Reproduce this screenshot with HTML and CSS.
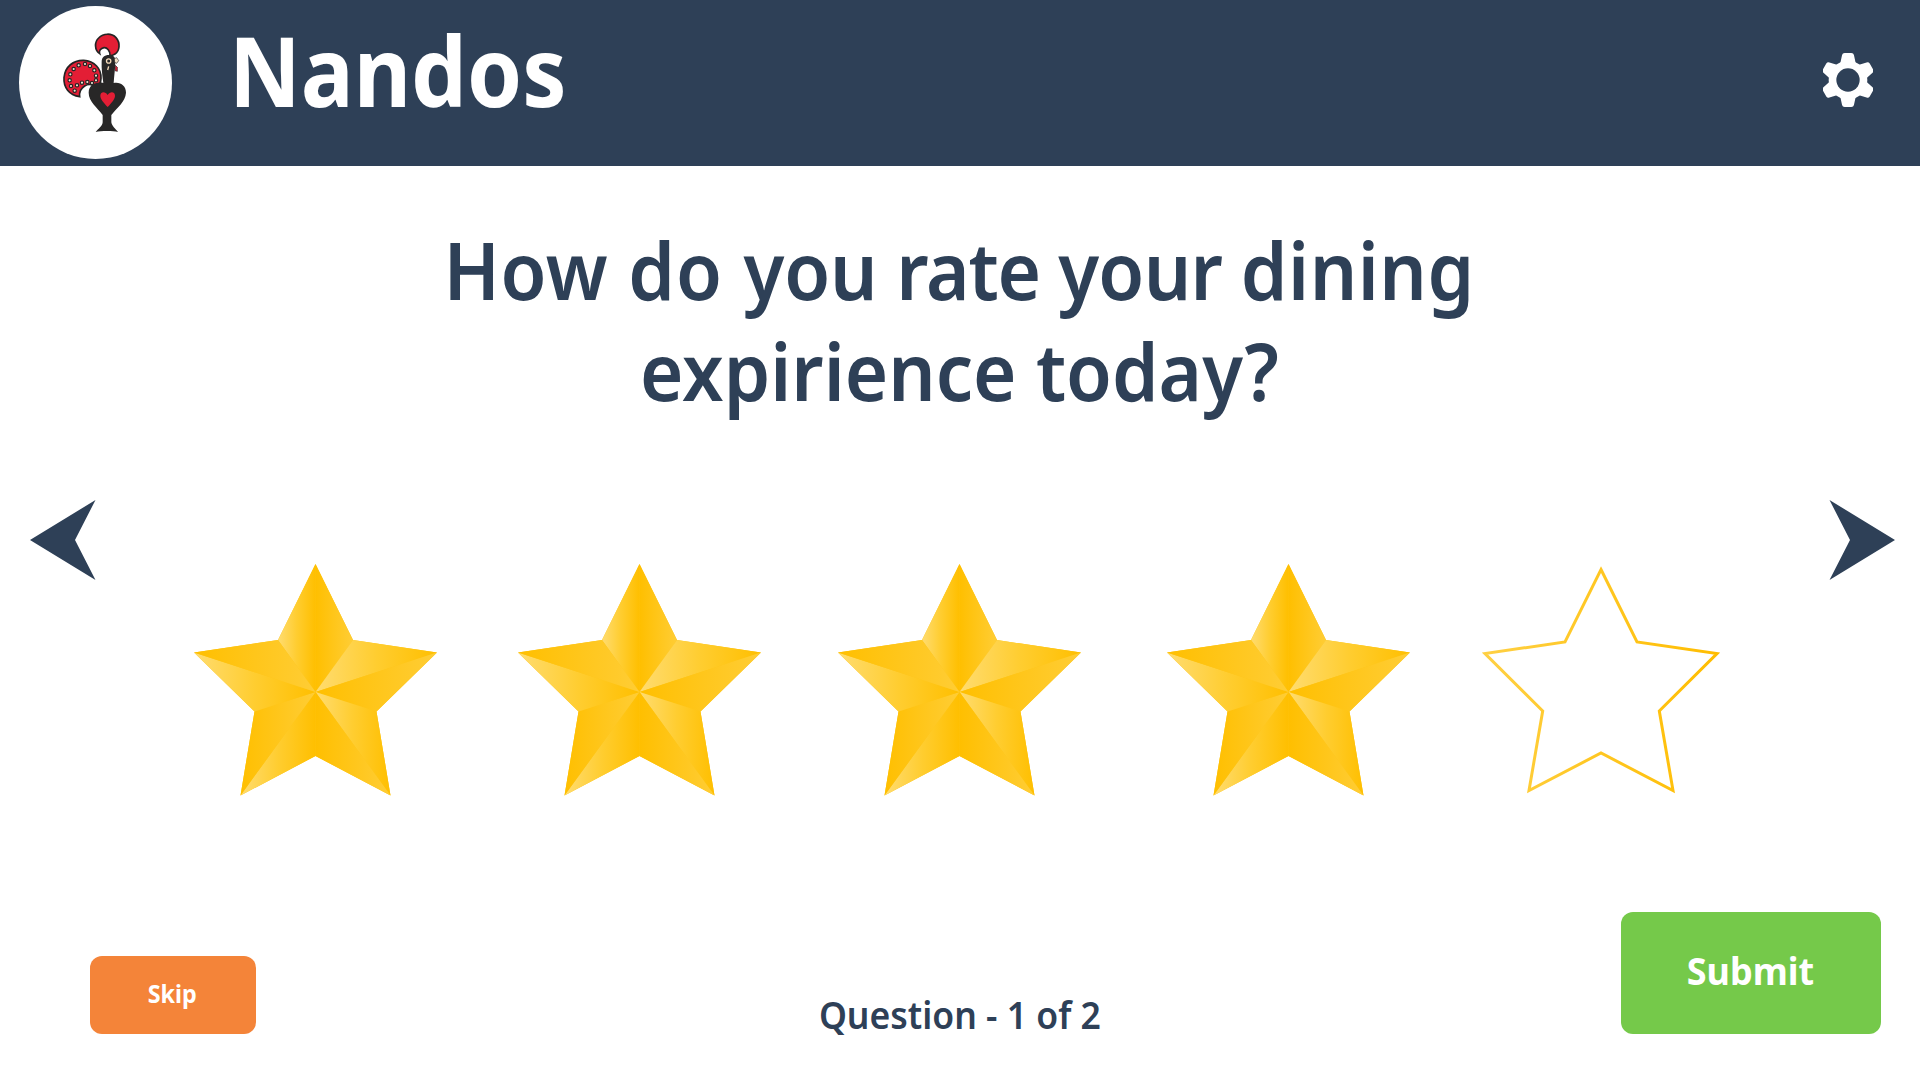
FILE: index.html
```html
<!DOCTYPE html>
<html lang="en">
<head>
<meta charset="utf-8">
<title>Nandos</title>
<link rel="stylesheet" href="styles.css">
</head>
<body>
<svg class="defs" width="0" height="0" aria-hidden="true">
  <defs>
    <linearGradient id="light"><stop offset="0" stop-color="#ffdc70"/><stop offset=".5" stop-color="#ffcd30"/><stop offset="1" stop-color="#ffbf00"/></linearGradient>
    <linearGradient id="deep"><stop offset="0" stop-color="#ffbf00"/><stop offset="1" stop-color="#ffcd35"/></linearGradient>
    <linearGradient id="outline"><stop offset="0" stop-color="#ffd043"/><stop offset="1" stop-color="#ffbd00"/></linearGradient>
    <symbol id="star" viewBox="0 0 243 232">
      <path fill="#ffc517" d="M121.500 0L159 76L243 88.500L182.500 147.500L196.500 231.500L121.500 192L46.500 231.500L60.500 147.500L0 88.500L84 76Z"/>
      <path fill="url(#light)" d="M121.500 0V128L84 76Z"/>
      <path fill="url(#deep)" d="M121.500 0V128L159 76Z"/>
      <path fill="url(#light)" d="M121.500 128L159 76L243 88.500Z"/>
      <path fill="url(#deep)" d="M121.500 128L243 88.500L182.500 147.500Z"/>
      <path fill="url(#light)" d="M121.500 128L182.500 147.500L196.500 231.500Z"/>
      <path fill="url(#deep)" d="M121.500 128L196.500 231.500L121.500 192Z"/>
      <path fill="url(#light)" d="M121.500 128V192L46.500 231.500Z"/>
      <path fill="url(#deep)" d="M121.500 128L46.500 231.500L60.500 147.500Z"/>
      <path fill="url(#light)" d="M121.500 128L60.500 147.500L0 88.500Z"/>
      <path fill="url(#deep)" d="M121.500 128L0 88.500L84 76Z"/>
    </symbol>
  </defs>
</svg>

<header class="topbar">
  <div class="logo">
    <svg viewBox="0 0 270 345" width="90" height="115">
      <path fill="#e31e35" stroke="#242424" stroke-width="5" d="M89 215C57 210 40 187 42 158C45 125 70 105 101 106C134 108 154 131 153 160C152 176 146 184 140 190C132 178 116 175 104 183C93 190 87 200 89 215Z"/>
      <path fill="#e31e35" stroke="#242424" stroke-width="5" d="M149 86C133 75 133 51 146 39C160 24 185 24 198 38C212 54 209 78 195 87C189 91 184 92 180 92C181 77 171 67 162 68C152 70 146 77 149 86Z"/>
      <g fill="#f3e3cf" stroke="#242424" stroke-width="3.500">
        <circle cx="59" cy="166" r="5"/><circle cx="61" cy="148" r="5"/><circle cx="71" cy="132" r="5"/><circle cx="86" cy="121" r="5"/><circle cx="105" cy="117" r="5"/><circle cx="120" cy="123" r="5"/><circle cx="133" cy="136" r="5"/><circle cx="138" cy="152" r="5"/><circle cx="138" cy="166" r="5"/><circle cx="126" cy="174" r="5"/><circle cx="112" cy="171" r="5"/><circle cx="96" cy="173" r="5"/><circle cx="81" cy="181" r="5"/><circle cx="63" cy="183" r="5"/><circle cx="74" cy="197" r="5"/>
      </g>
      <path fill="#282727" d="M160 174C157 150 154 130 155 110C155 97 163 90 177 90C190 90 197 97 196 108C196 130 192 155 191 174C211 170 228 182 228 203C226 231 202 246 184 270V292C186 304 197 312 204 321C190 317 153 317 137 321C145 311 157 304 158 292V270C142 247 116 230 116 203C116 180 138 169 160 174Z"/>
      <path fill="#e31e35" d="M173 246C160 232 151 222 151 212C152 199 166 199 173 210C180 199 194 199 195 212C195 222 186 232 173 246Z"/>
      <circle cx="176" cy="108" r="6.500" fill="#282727" stroke="#f3d9b8" stroke-width="4"/>
      <path fill="#f3e0c5" stroke="#282727" stroke-width="2" d="M193 101L200 98L206 107L200 115L194 112Z"/>
      <path fill="#e31e35" stroke="#282727" stroke-width="2" d="M196 121L202 127L202 139L195 137Z"/>
      <path stroke="#f3d9b8" stroke-width="4" d="M176 124L173 135"/>
    </svg>
  </div>
  <div class="brand">Nandos</div>
  <svg class="gear" viewBox="-74 -81 148 162" width="50" height="54">
    <defs><path id="tooth" d="M-10 -73H10L15 -50H-15Z"/></defs>
    <g fill="#fff" stroke="#fff" stroke-width="16" stroke-linejoin="round">
      <circle r="50"/>
      <use href="#tooth"/><use href="#tooth" transform="rotate(60)"/><use href="#tooth" transform="rotate(120)"/><use href="#tooth" transform="rotate(180)"/><use href="#tooth" transform="rotate(240)"/><use href="#tooth" transform="rotate(300)"/>
    </g>
    <circle r="35" fill="#2e4057"/>
  </svg>
</header>

<main class="survey">
  <h1 class="question"><span class="line first"><span class="w-how">How </span><span class="w-do">do </span><span class="w-you">you </span><span class="w-rate">rate </span><span class="w-your">your </span><span class="w-dining">dining</span></span><span class="line second">expirience today?</span></h1>

  <section class="rating">
    <svg class="arrow prev" viewBox="0 0 66 80" width="66" height="80"><path d="M0 40L65.500 0L45 40L65.500 80Z"/></svg>
    <div class="stars">
      <svg class="star" width="243" height="232"><use href="#star"/></svg>
      <svg class="star" width="243" height="232"><use href="#star"/></svg>
      <svg class="star" width="243" height="232"><use href="#star"/></svg>
      <svg class="star" width="243" height="232"><use href="#star"/></svg>
      <svg class="star empty" viewBox="0 0 238 232" width="238" height="232"><path fill="none" stroke="url(#outline)" stroke-width="3" d="M119 5.500L155 78L235 89.500L177.300 147L191 226.500L119 189L47 226.500L60.700 147L3 89.500L83 78Z"/></svg>
    </div>
    <svg class="arrow next" viewBox="0 0 66 80" width="66" height="80"><path d="M66 40L.5 0L21 40L.5 80Z"/></svg>
  </section>

  <footer class="actions">
    <button class="btn skip"><span>Skip</span></button>
    <div class="progress"><span>Question - 1 of 2</span></div>
    <button class="btn submit"><span>Submit</span></button>
  </footer>
</main>
</body>
</html>
```
FILE: styles.css
```css
* { box-sizing: border-box; }

body {
  margin: 0;
  width: 1920px;
  height: 1080px;
  overflow: hidden;
  display: flex;
  flex-direction: column;
  background: #fff;
  color: #2e4057;
  font-family: "Noto Sans", "Open Sans", sans-serif;
}

svg { display: block; flex: none; }
.defs { height: 0; }

.topbar {
  display: flex;
  flex: none;
  align-items: flex-start;
  height: 166px;
  padding: 6px 47px 0 19px;
  background: #2e4057;
}

.logo {
  width: 153px;
  height: 153px;
  padding: 19.3px 0 0 31px;
  border-radius: 50%;
  background: #fff;
}

.brand {
  margin: 16px auto 0 56.5px;
  color: #fff;
  font-size: 96px;
  font-weight: 700;
  line-height: 96px;
  transform: scaleX(.92);
  transform-origin: left;
}

.gear { margin-top: 47px; }

.survey {
  display: flex;
  flex: 1;
  flex-direction: column;
}

.question {
  display: flex;
  flex-direction: column;
  align-items: center;
  height: 334px;
  margin: 0;
  padding-top: 52px;
  font-size: 80px;
  font-weight: 600;
  line-height: 101px;
}

.line { white-space: pre; }
.first { transform: translateX(-.5px) scaleX(.933); }
.second { transform: translateX(-1px) scaleX(.93); }

.w-how { letter-spacing: .65px; }
.w-do { letter-spacing: 1.1px; }
.w-you { letter-spacing: -.33px; }
.w-rate { letter-spacing: -1.3px; }
.w-your { letter-spacing: -.8px; }
.w-dining { letter-spacing: .5px; }

.rating {
  display: flex;
  height: 412px;
  padding: 0 25.5px 0 30px;
}

.arrow { fill: #2e4057; }
.prev { margin-right: 98px; }

.stars {
  display: flex;
  flex: 1;
  padding-top: 64px;
}

.star { margin-right: 81px; }
.star:nth-child(2) { margin-right: 77px; }
.star:nth-child(3) { margin-right: 86px; }
.star:nth-child(4) { margin-right: 72px; }
.star:last-child { margin-right: 0; }

.actions {
  display: grid;
  grid-template-columns: 1fr auto 1fr;
  align-items: end;
  height: 122px;
  padding: 0 39px 0 89.5px;
}

.btn {
  display: flex;
  align-items: center;
  justify-content: center;
  border: 0;
  border-radius: 12px;
  color: #fff;
  font-family: inherit;
  font-weight: 700;
}

.skip {
  width: 166px;
  height: 78px;
  padding: 0 0 4px;
  background: #f48439;
  font-size: 25px;
}

.skip span { transform: scaleX(.935); }

.submit {
  justify-self: end;
  width: 260px;
  height: 122px;
  padding: 0 0 5px;
  background: #75c94a;
  font-size: 37px;
}

.submit span { transform: scaleX(.973); }

.progress {
  margin-bottom: -1px;
  font-size: 37px;
  font-weight: 600;
  line-height: 40px;
}

.progress span {
  display: block;
  transform: translateX(-25px) scaleX(.96);
}
```
